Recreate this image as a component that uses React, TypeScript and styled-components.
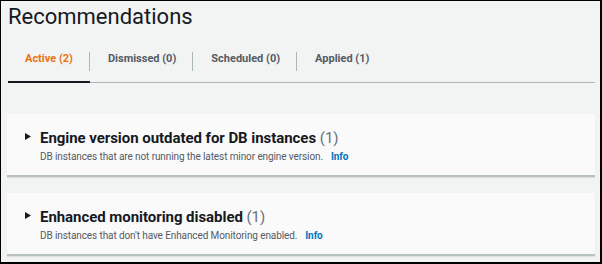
import React, { ReactElement } from 'react';
import styled, { createGlobalStyle } from 'styled-components';

const GlobalStyle = createGlobalStyle`
  html, body {
    margin: 0;
    padding: 0;
    background: #ffffff;
  }
  body {
    font-family: Roboto, "Liberation Sans", Arial, sans-serif;
  }
`;

const Frame = styled.div`
  width: 602px;
  height: 264px;
  box-sizing: border-box;
  border: 1px solid #000;
  border-right-width: 2px;
  border-bottom-width: 2px;
  background: #f2f3f3;
  overflow: hidden;
  padding: 0 5px 0 6px;
`;

const Title = styled.h1`
  margin: 0;
  padding: 1px 0 0 1px;
  font-size: 22px;
  font-weight: 400;
  line-height: 30px;
  color: #16191f;
`;

const TabBar = styled.div`
  display: flex;
  margin: 15px 0 0 1px;
  border-bottom: 1px solid #aab7b8;
  height: 36px;
  box-sizing: border-box;
`;

const Tab = styled.div<{ $active?: boolean }>`
  position: relative;
  display: flex;
  align-items: center;
  padding: 0 17px 0 18px;
  height: 100%;
  font-size: 11px;
  font-weight: 700;
  color: ${({ $active }) => ($active ? '#ec7211' : '#545b64')};
  &:first-child {
    padding-left: 17px;
  }
  &:not(:last-child)::after {
    content: '';
    position: absolute;
    right: 0;
    top: 5px;
    bottom: 11px;
    width: 1px;
    background: #aab7b8;
  }
  ${({ $active }) =>
    $active &&
    `
    &::before {
      content: '';
      position: absolute;
      left: 0;
      right: 0;
      bottom: -1px;
      height: 2px;
      background: #16191f;
    }
  `}
`;

const TabLabel = styled.span`
  margin-top: -12px;
`;

const Cards = styled.div`
  display: flex;
  flex-direction: column;
  gap: 16px;
  margin-top: 31px;
`;

const Card = styled.div`
  background: #fafafa;
  border-bottom: 2px solid #b8c2c3;
  box-shadow: 0 1px 1px rgba(0, 0, 0, 0.08);
  height: 63px;
  box-sizing: border-box;
  padding: 13px 0 0 18px;
  display: flex;
  gap: 9px;
`;

const Caret = styled.svg`
  width: 6px;
  height: 7px;
  margin-top: 6px;
  flex: none;
`;

const CardBody = styled.div`
  display: flex;
  flex-direction: column;
`;

const CardTitle = styled.div`
  font-size: 15px;
  font-weight: 700;
  color: #16191f;
  line-height: 22px;
  letter-spacing: -0.05px;
`;

const Count = styled.span`
  font-weight: 400;
  color: #687078;
`;

const Description = styled.div`
  font-size: 10px;
  color: #545b64;
  line-height: 15px;
  letter-spacing: -0.1px;
`;

const InfoLink = styled.span`
  color: #0073bb;
  font-weight: 700;
  margin-left: 8px;
`;

const tabs = [
  { label: 'Active (2)', active: true },
  { label: 'Dismissed (0)' },
  { label: 'Scheduled (0)' },
  { label: 'Applied (1)' },
];

const recommendations = [
  {
    title: 'Engine version outdated for DB instances',
    count: 1,
    text: 'DB instances that are not running the latest minor engine version.',
  },
  {
    title: 'Enhanced monitoring disabled',
    count: 1,
    text: "DB instances that don't have Enhanced Monitoring enabled.",
  },
];

function App(): ReactElement {
  return (
    <>
      <GlobalStyle />
      <Frame>
        <Title>Recommendations</Title>
        <TabBar>
          {tabs.map((t) => (
            <Tab key={t.label} $active={t.active}>
              <TabLabel>{t.label}</TabLabel>
            </Tab>
          ))}
        </TabBar>
        <Cards>
          {recommendations.map((r) => (
            <Card key={r.title}>
              <Caret viewBox="0 0 6 7">
                <path d="M0 0 L6 3.5 L0 7 Z" fill="#16191f" />
              </Caret>
              <CardBody>
                <CardTitle>
                  {r.title} <Count>({r.count})</Count>
                </CardTitle>
                <Description>
                  {r.text}
                  <InfoLink>Info</InfoLink>
                </Description>
              </CardBody>
            </Card>
          ))}
        </Cards>
      </Frame>
    </>
  );
}

export default App;
